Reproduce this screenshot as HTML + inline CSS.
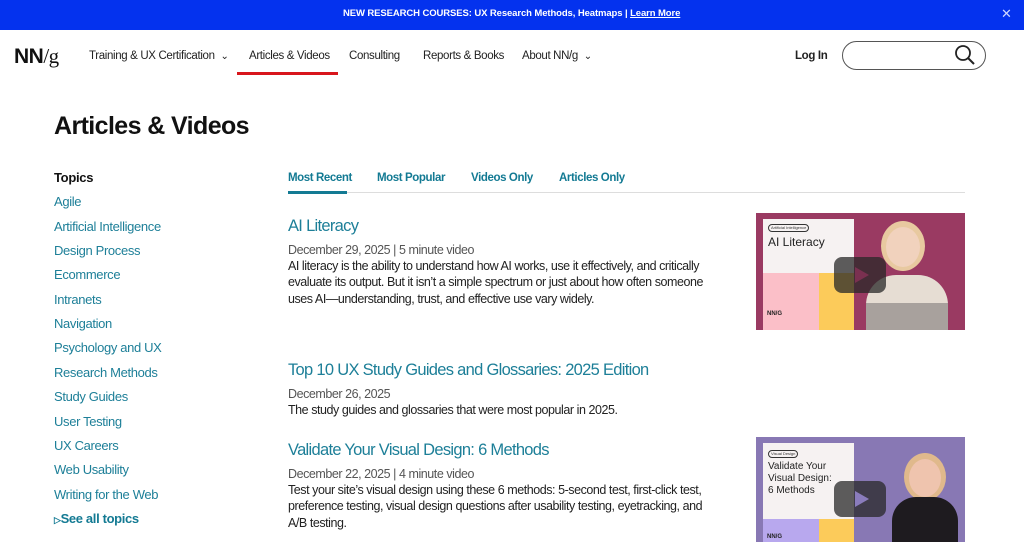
<!DOCTYPE html>
<html><head><meta charset="utf-8"><style>
*{margin:0;padding:0;box-sizing:border-box}
body{width:1024px;height:542px;overflow:hidden;background:#fff;font-family:"Liberation Sans",sans-serif;position:relative;color:#222}
.a{position:absolute;white-space:nowrap;line-height:20px}
.t{color:#1d7f98;font-size:13px;letter-spacing:-0.35px}
.nav{font-size:11.5px;color:#222;letter-spacing:-0.35px}
.tab{font-size:11.5px;color:#137a93;font-weight:bold;letter-spacing:-0.4px}
.h{font-size:16.5px;color:#1d7f98;letter-spacing:-0.7px;line-height:22px}
.m{font-size:12.5px;color:#555;letter-spacing:-0.45px}
.p{font-size:12.5px;color:#222;letter-spacing:-0.45px;line-height:16.3px}
</style></head><body>
<div style="position:absolute;left:0;top:0;width:1024px;height:30px;background:#0432ee"></div>
<div class="a" style="left:343px;top:4px;color:#fff;font-size:9.5px;font-weight:bold;letter-spacing:-0.1px">NEW RESEARCH COURSES: UX Research Methods, Heatmaps | <u>Learn More</u></div>
<div class="a" style="left:1001px;top:4px;color:#cfd8ff;font-size:13px">✕</div>

<div class="a" style="left:14px;top:44px;font-size:21px;color:#111;line-height:24px;letter-spacing:-0.5px"><b>NN</b><span style="font-family:'Liberation Serif',serif;font-weight:normal">/g</span></div>
<div class="a nav" style="left:89px;top:46px">Training &amp; UX Certification <span style="font-size:10px;margin-left:3px">&#8964;</span></div>
<div class="a nav" style="left:249px;top:46px">Articles &amp; Videos</div>
<div style="position:absolute;left:237px;top:72px;width:101px;height:3px;background:#d8161c"></div>
<div class="a nav" style="left:349px;top:46px">Consulting</div>
<div class="a nav" style="left:423px;top:46px">Reports &amp; Books</div>
<div class="a nav" style="left:522px;top:46px">About NN/g <span style="font-size:10px;margin-left:3px">&#8964;</span></div>
<div class="a nav" style="left:795px;top:46px;font-weight:bold">Log In</div>
<div style="position:absolute;left:842px;top:41px;width:144px;height:29px;border:1.3px solid #555;border-radius:15px"></div>
<svg style="position:absolute;left:954px;top:44px" width="22" height="22" viewBox="0 0 22 22"><circle cx="9" cy="9" r="7" fill="none" stroke="#222" stroke-width="1.8"/><path d="M14 14l6 6" stroke="#222" stroke-width="2"/></svg>

<div class="a" style="left:54px;top:110px;font-size:25px;font-weight:bold;color:#111;line-height:32px;letter-spacing:-0.6px">Articles &amp; Videos</div>

<div class="a" style="left:54px;top:168px;font-size:13px;font-weight:bold;color:#111;letter-spacing:-0.3px">Topics</div>
<div class="a t" style="left:54px;top:192px">Agile</div>
<div class="a t" style="left:54px;top:217px">Artificial Intelligence</div>
<div class="a t" style="left:54px;top:241px">Design Process</div>
<div class="a t" style="left:54px;top:265px">Ecommerce</div>
<div class="a t" style="left:54px;top:290px">Intranets</div>
<div class="a t" style="left:54px;top:314px">Navigation</div>
<div class="a t" style="left:54px;top:338px">Psychology and UX</div>
<div class="a t" style="left:54px;top:363px">Research Methods</div>
<div class="a t" style="left:54px;top:387px">Study Guides</div>
<div class="a t" style="left:54px;top:412px">User Testing</div>
<div class="a t" style="left:54px;top:436px">UX Careers</div>
<div class="a t" style="left:54px;top:460px">Web Usability</div>
<div class="a t" style="left:54px;top:485px">Writing for the Web</div>
<div class="a t" style="left:54px;top:509px;font-weight:bold;color:#137a93"><span style="font-size:9px">&#9655;</span>See all topics</div>

<div class="a tab" style="left:288px;top:168px">Most Recent</div>
<div class="a tab" style="left:377px;top:168px">Most Popular</div>
<div class="a tab" style="left:471px;top:168px">Videos Only</div>
<div class="a tab" style="left:559px;top:168px">Articles Only</div>
<div style="position:absolute;left:288px;top:192px;width:677px;height:1px;background:#ddd"></div>
<div style="position:absolute;left:288px;top:191px;width:59px;height:3px;background:#137a93"></div>

<div class="a h" style="left:288px;top:215px">AI Literacy</div>
<div class="a m" style="left:288px;top:240px">December 29, 2025 | 5 minute video</div>
<div class="a p" style="left:288px;top:258px">AI literacy is the ability to understand how AI works, use it effectively, and critically<br>evaluate its output. But it isn’t a simple spectrum or just about how often someone<br>uses AI—understanding, trust, and effective use vary widely.</div>

<div class="a h" style="left:288px;top:359px">Top 10 UX Study Guides and Glossaries: 2025 Edition</div>
<div class="a m" style="left:288px;top:384px">December 26, 2025</div>
<div class="a p" style="left:288px;top:402px">The study guides and glossaries that were most popular in 2025.</div>

<div class="a h" style="left:288px;top:439px">Validate Your Visual Design: 6 Methods</div>
<div class="a m" style="left:288px;top:464px">December 22, 2025 | 4 minute video</div>
<div class="a p" style="left:288px;top:482px">Test your site’s visual design using these 6 methods: 5-second test, first-click test,<br>preference testing, visual design questions after usability testing, eyetracking, and<br>A/B testing.</div>

<!-- thumb 1 -->
<div style="position:absolute;left:756px;top:213px;width:209px;height:117px;background:#9a3a62;overflow:hidden">
 <div style="position:absolute;left:7px;top:6px;width:91px;height:54px;background:#f6f2f2"></div>
 <div style="position:absolute;left:7px;top:60px;width:56px;height:57px;background:#fbbfc8"></div>
 <div style="position:absolute;left:63px;top:60px;width:35px;height:57px;background:#fccb5a"></div>
 <div style="position:absolute;left:12px;top:11px;font-size:4px;border:0.5px solid #333;border-radius:4px;padding:0 2px;line-height:6px;color:#333">Artificial Intelligence</div>
 <div style="position:absolute;left:12px;top:22px;font-size:12px;color:#222;white-space:nowrap">AI Literacy</div>
 <div style="position:absolute;left:11px;top:98px;font-size:6px;font-weight:bold;color:#222">NN/G</div>
 <div style="position:absolute;left:125px;top:8px;width:44px;height:50px;border-radius:50%;background:#e8c9a0"></div>
 <div style="position:absolute;left:130px;top:14px;width:34px;height:40px;border-radius:50%;background:#f1d2bd"></div>
 <div style="position:absolute;left:110px;top:62px;width:82px;height:60px;border-radius:30px 30px 0 0;background:#e6ddd3"></div>
 <div style="position:absolute;left:110px;top:90px;width:82px;height:30px;background:#6a6668;opacity:.5"></div>
 <div style="position:absolute;left:78px;top:44px;width:52px;height:36px;border-radius:8px;background:rgba(40,40,40,.75)"></div>
 <div style="position:absolute;left:99px;top:54px;width:0;height:0;border-left:14px solid #7a3050;border-top:8px solid transparent;border-bottom:8px solid transparent"></div>
</div>
<!-- thumb 2 -->
<div style="position:absolute;left:756px;top:437px;width:209px;height:105px;background:#8878b4;overflow:hidden">
 <div style="position:absolute;left:7px;top:6px;width:91px;height:76px;background:#f6f2f2"></div>
 <div style="position:absolute;left:7px;top:82px;width:56px;height:30px;background:#b8a8ee"></div>
 <div style="position:absolute;left:63px;top:82px;width:35px;height:30px;background:#fccb5a"></div>
 <div style="position:absolute;left:12px;top:13px;font-size:4px;border:0.5px solid #333;border-radius:4px;padding:0 2px;line-height:6px;color:#333">Visual Design</div>
 <div style="position:absolute;left:12px;top:24px;font-size:10px;line-height:12px;color:#222;white-space:nowrap">Validate Your<br>Visual Design:<br>6 Methods</div>
 <div style="position:absolute;left:11px;top:97px;font-size:6px;font-weight:bold;color:#222">NN/G</div>
 <div style="position:absolute;left:148px;top:16px;width:42px;height:48px;border-radius:50%;background:#e0b98c"></div>
 <div style="position:absolute;left:153px;top:22px;width:32px;height:38px;border-radius:50%;background:#efc4ae"></div>
 <div style="position:absolute;left:136px;top:60px;width:66px;height:50px;border-radius:24px 24px 0 0;background:#1e1b1f"></div>
 <div style="position:absolute;left:78px;top:44px;width:52px;height:36px;border-radius:8px;background:rgba(40,40,40,.75)"></div>
 <div style="position:absolute;left:99px;top:54px;width:0;height:0;border-left:14px solid #8a7cbc;border-top:8px solid transparent;border-bottom:8px solid transparent"></div>
</div>
</body></html>
